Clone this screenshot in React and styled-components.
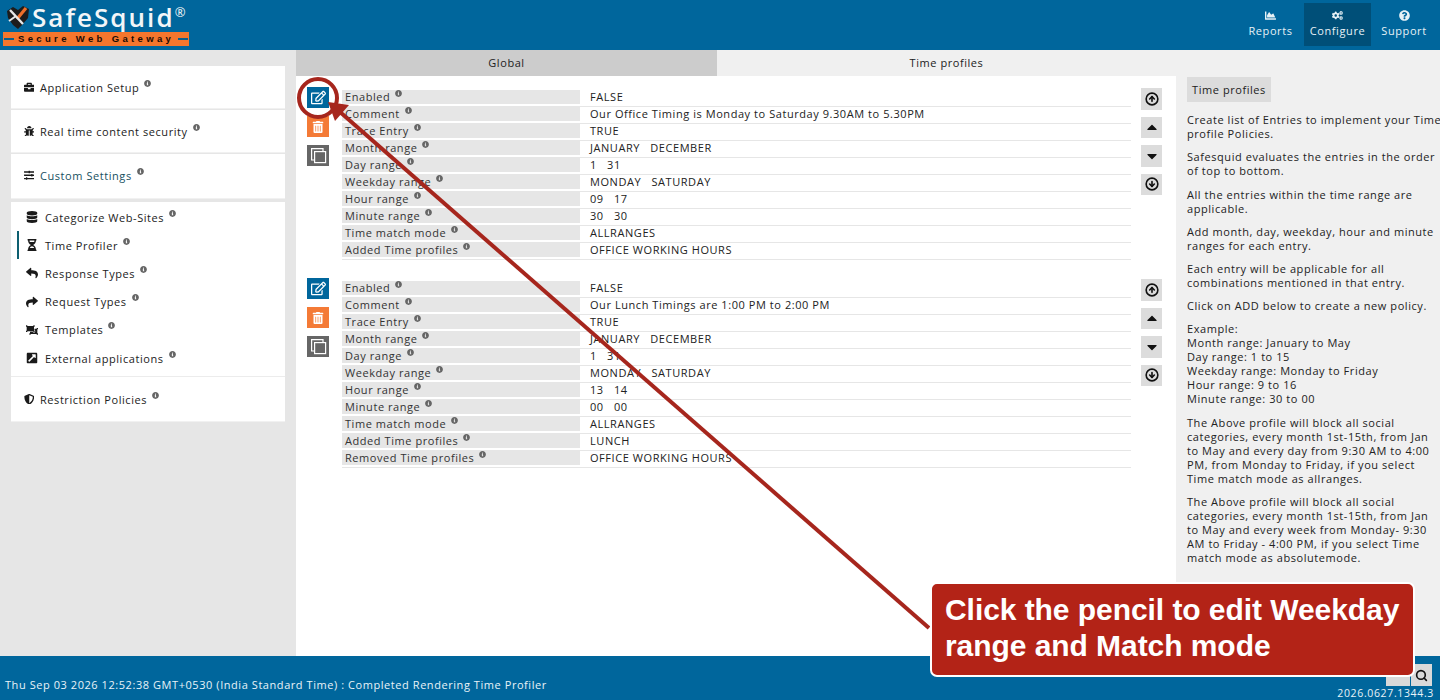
import React from 'react';
import styled, { createGlobalStyle } from 'styled-components';
import {
  FaBriefcase, FaBug, FaSlidersH, FaDatabase, FaHourglassHalf, FaReply, FaShare,
  FaObjectUngroup, FaExternalLinkSquareAlt, FaShieldAlt, FaInfoCircle, FaChartArea,
  FaCogs, FaQuestionCircle, FaRegEdit, FaTrashAlt, FaCaretUp, FaCaretDown,
} from 'react-icons/fa';
import { CircleArrowUp, CircleArrowDown, Search } from 'lucide-react';

const Global = createGlobalStyle`
  html, body { margin: 0; padding: 0; height: 700px; overflow: hidden; }
  body { font-family: "Open Sans", "Noto Sans", sans-serif; font-size: 11px; letter-spacing: 0.56px; color: #222; }
  p { margin: 0; }
`;

const Page = styled.div`
  position: relative;
  width: 1440px;
  height: 700px;
  display: grid;
  grid-template-rows: 50px 606px 44px;
  overflow: hidden;
`;

const Header = styled.header`
  background: #00669c;
  display: flex;
  justify-content: space-between;
  padding-right: 3px;
`;

const Logo = styled.div`
  width: 190px;
  padding: 2px 0 0 3px;
  display: flex;
  flex-direction: column;
`;

const LogoTop = styled.div`
  display: flex;
  align-items: center;
  height: 30px;
  gap: 2px;
  padding-left: 3px;
`;

const LogoWord = styled.span`
  font-family: "Open Sans", sans-serif;
  font-weight: 600;
  font-size: 26px;
  letter-spacing: 2.05px;
  color: #f2f6f8;
  line-height: 30px;
  sup { font-size: 13px; font-weight: 400; letter-spacing: 0; vertical-align: 10px; line-height: 0; }
`;

const LogoBar = styled.div`
  position: relative;
  width: 186px;
  height: 14px;
  background: #f5762d;
  color: #1b0c05;
  font-family: "Liberation Sans", sans-serif;
  font-weight: 700;
  font-size: 9.5px;
  letter-spacing: 3.35px;
  line-height: 14px;
  padding-left: 15px;
  box-sizing: border-box;
  white-space: nowrap;
  &::before, &::after {
    content: "";
    position: absolute;
    top: 6px;
    width: 10px;
    height: 2px;
    background: #0c5f8b;
  }
  &::before { left: 1px; }
  &::after { right: 1px; }
`;

const TopNav = styled.nav`
  display: flex;
  align-items: flex-start;
  padding-top: 3px;
`;

const TopItem = styled.div`
  width: ${p => p.$w}px;
  height: 43px;
  display: flex;
  flex-direction: column;
  align-items: center;
  padding-top: 7px;
  box-sizing: border-box;
  color: #e6f1f6;
  font-size: 11px;
  letter-spacing: 0.6px;
  background: ${p => (p.$active ? '#004f78' : 'transparent')};
  svg { font-size: 11px; margin-bottom: 2px; }
`;

const Body = styled.div`
  display: grid;
  grid-template-columns: 296px 880px 264px;
  min-height: 0;
`;

const Sidebar = styled.aside`
  background: #e6e6e6;
  padding: 16px 11px 0;
`;

const SideCard = styled.div`
  background: #fff;
  height: ${p => p.$h}px;
  margin-bottom: 2px;
  display: flex;
  align-items: center;
  padding: 0 0 ${p => p.$pb || 0}px 11px;
  box-sizing: border-box;
  color: ${p => (p.$accent ? '#17505f' : '#222')};
  box-shadow: 0 1px 0 #f1f1f1;
`;

const SubList = styled.div`
  background: #fff;
  margin-top: 4px;
  padding-top: 1px;
  display: flex;
  flex-direction: column;
  height: 175px;
  box-sizing: border-box;
  border-bottom: 1px solid #ececec;
`;

const SubItem = styled.div`
  height: 28.2px;
  display: flex;
  align-items: center;
  padding-left: ${p => (p.$active ? 6 : 8)}px;
  margin-left: 6px;
  border-left: ${p => (p.$active ? '2px solid #0d5f70' : '0')};
`;

const SideIcon = styled.span`
  display: inline-flex;
  width: 14px;
  margin-right: ${p => p.$mr || 4}px;
  justify-content: center;
  font-size: ${p => p.$size || 10.5}px;
  color: #1a1a1a;
`;

const Info = styled(FaInfoCircle)`
  font-size: 7px;
  color: #666;
  margin-left: 5px;
  position: relative;
  top: -4px;
  flex: none;
`;

const Main = styled.main`
  background: #fff;
  display: flex;
  flex-direction: column;
`;

const Tabs = styled.div`
  display: grid;
  grid-template-columns: 421px 459px;
  height: 26px;
`;

const Tab = styled.div`
  background: ${p => (p.$active ? '#cccccc' : '#f0f0f0')};
  display: flex;
  align-items: center;
  justify-content: center;
  padding-bottom: 1px;
  box-sizing: border-box;
  color: #222;
`;

const Entries = styled.div`
  padding: 14px 14px 0 11px;
  display: flex;
  flex-direction: column;
  gap: 21px;
`;

const Entry = styled.section`
  display: grid;
  grid-template-columns: 35px 1fr 21px;
`;

const ActionCol = styled.div`
  display: flex;
  flex-direction: column;
  gap: 8px;
  margin-top: -3px;
`;

const ActionBtn = styled.div`
  width: 22px;
  height: 21px;
  background: ${p => p.$bg};
  color: #fff;
  display: flex;
  align-items: center;
  justify-content: center;
  font-size: ${p => p.$size || 12}px;
`;

const Rows = styled.div`
  display: flex;
  flex-direction: column;
  margin-right: 10px;
`;

const Row = styled.div`
  display: grid;
  grid-template-columns: 238px 1fr;
  column-gap: 10px;
  height: 17px;
  box-sizing: border-box;
  border-bottom: 1px solid #e6e6e6;
  align-items: start;
`;

const RowLabel = styled.div`
  background: #e6e6e6;
  height: 14px;
  line-height: 14px;
  padding-left: 3px;
  display: flex;
  align-items: center;
  color: #333;
`;

const RowValue = styled.div`
  height: 14px;
  line-height: 14px;
  white-space: pre;
  color: #222;
`;

const MoveCol = styled.div`
  display: flex;
  flex-direction: column;
  gap: 7px;
  margin-top: -2px;
`;

const MoveBtn = styled.div`
  width: 21px;
  height: 21.5px;
  background: #dcdcdc;
  color: #111;
  display: flex;
  align-items: center;
  justify-content: center;
  font-size: 16px;
`;

const Help = styled.aside`
  background: #f0f0f0;
  padding: 27px 0 0 11px;
  line-height: 14px;
  color: #222;
  display: flex;
  flex-direction: column;
  gap: 9.2px;
  white-space: nowrap;
`;

const HelpTitle = styled.div`
  background: #dcdcdc;
  width: 84px;
  height: 25px;
  line-height: 25px;
  text-align: center;
  margin-bottom: 2px;
`;

const Footer = styled.footer`
  background: #00669c;
  color: #e8f3f8;
  display: flex;
  justify-content: space-between;
  align-items: flex-end;
  padding: 0 6px 0 5px;
`;

const Status = styled.div`
  padding-bottom: 8px;
`;

const FooterRight = styled.div`
  display: flex;
  flex-direction: column;
  align-items: flex-end;
`;

const FooterTools = styled.div`
  display: flex;
  gap: 1px;
  margin-right: 2px;
`;

const ToolBtn = styled.div`
  width: ${p => p.$w}px;
  height: 22px;
  background: #d9d9d9;
  color: #111;
  display: flex;
  align-items: center;
  justify-content: center;
`;

const Version = styled.div`
  font-size: 10.5px;
  letter-spacing: 0.65px;
  line-height: 14px;
`;

const Overlay = styled.svg`
  position: absolute;
  inset: 0;
  pointer-events: none;
`;

const Callout = styled.div`
  position: absolute;
  left: 930px;
  top: 582px;
  width: 485px;
  height: 95px;
  box-sizing: border-box;
  background: #b32317;
  border: 2px solid #fff;
  border-radius: 7px;
  color: #fff;
  font-family: "Liberation Sans", Arial, sans-serif;
  font-weight: 700;
  font-size: 30px;
  letter-spacing: -0.06px;
  line-height: 36px;
  padding: 8px 0 0 13px;
`;

const Label = ({ children }) => <>{children}<Info /></>;

const entry1 = [
  ['Enabled', 'FALSE'],
  ['Comment', 'Our Office Timing is Monday to Saturday 9.30AM to 5.30PM'],
  ['Trace Entry', 'TRUE'],
  ['Month range', 'JANUARY   DECEMBER'],
  ['Day range', '1   31'],
  ['Weekday range', 'MONDAY   SATURDAY'],
  ['Hour range', '09   17'],
  ['Minute range', '30   30'],
  ['Time match mode', 'ALLRANGES'],
  ['Added Time profiles', 'OFFICE WORKING HOURS'],
];

const entry2 = [
  ['Enabled', 'FALSE'],
  ['Comment', 'Our Lunch Timings are 1:00 PM to 2:00 PM'],
  ['Trace Entry', 'TRUE'],
  ['Month range', 'JANUARY   DECEMBER'],
  ['Day range', '1   31'],
  ['Weekday range', 'MONDAY   SATURDAY'],
  ['Hour range', '13   14'],
  ['Minute range', '00   00'],
  ['Time match mode', 'ALLRANGES'],
  ['Added Time profiles', 'LUNCH'],
  ['Removed Time profiles', 'OFFICE WORKING HOURS'],
];

const subItems = [
  [FaDatabase, 'Categorize Web-Sites'],
  [FaHourglassHalf, 'Time Profiler', true],
  [FaReply, 'Response Types'],
  [FaShare, 'Request Types'],
  [FaObjectUngroup, 'Templates'],
  [FaExternalLinkSquareAlt, 'External applications'],
];

const CloneIcon = () => (
  <svg width="17" height="17" viewBox="0 0 17 17" fill="none" stroke="#fff" strokeWidth="1.2" aria-hidden="true">
    <path d="M4 13 H1.6 V1.6 H13 V4" />
    <rect x="4.6" y="4.6" width="11" height="11" />
  </svg>
);

const EntryBlock = ({ rows }) => (
  <Entry>
    <ActionCol>
      <ActionBtn $bg="#00669c" $size={15}><FaRegEdit /></ActionBtn>
      <ActionBtn $bg="#f47a36" $size={12}><FaTrashAlt /></ActionBtn>
      <ActionBtn $bg="#666666"><CloneIcon /></ActionBtn>
    </ActionCol>
    <Rows>
      {rows.map(([k, v]) => (
        <Row key={k}>
          <RowLabel><Label>{k}</Label></RowLabel>
          <RowValue>{v}</RowValue>
        </Row>
      ))}
    </Rows>
    <MoveCol>
      <MoveBtn><CircleArrowUp size={14} strokeWidth={2.8} /></MoveBtn>
      <MoveBtn><FaCaretUp /></MoveBtn>
      <MoveBtn><FaCaretDown /></MoveBtn>
      <MoveBtn><CircleArrowDown size={14} strokeWidth={2.8} /></MoveBtn>
    </MoveCol>
  </Entry>
);

export default function App() {
  return (
    <Page>
      <Global />
      <Header>
        <Logo>
          <LogoTop>
            <svg width="24" height="24" viewBox="0 0 24 24" aria-hidden="true">
              <path d="M1 6 L7 2 L12 5 L17 1 L23 4 L22 13 L16 20 L12 24 L7 20 L2 13 Z" fill="#1d1c1c" />
              <path d="M11 14 L20 3" stroke="#ef6f2a" strokeWidth="3.2" />
              <path d="M4 5 L17 19" stroke="#e8e8e8" strokeWidth="2.4" />
              <path d="M3 16 L10 11" stroke="#e8e8e8" strokeWidth="2" />
            </svg>
            <LogoWord>SafeSquid<sup>®</sup></LogoWord>
          </LogoTop>
          <LogoBar>Secure Web Gateway</LogoBar>
        </Logo>
        <TopNav>
          <TopItem $w={67}><FaChartArea />Reports</TopItem>
          <TopItem $w={67} $active><FaCogs />Configure</TopItem>
          <TopItem $w={66}><FaQuestionCircle />Support</TopItem>
        </TopNav>
      </Header>
      <Body>
        <Sidebar>
          <SideCard $h={42}><SideIcon><FaBriefcase /></SideIcon><Label>Application Setup</Label></SideCard>
          <SideCard $h={42}><SideIcon><FaBug /></SideIcon><Label>Real time content security</Label></SideCard>
          <SideCard $h={44} $pb={2} $accent><SideIcon><FaSlidersH /></SideIcon><Label>Custom Settings</Label></SideCard>
          <SubList>
            {subItems.map(([Icon, text, active]) => (
              <SubItem key={text} $active={active}>
                <SideIcon $mr={6} $size={12}><Icon /></SideIcon>
                <Label>{text}</Label>
              </SubItem>
            ))}
          </SubList>
          <SideCard $h={44}><SideIcon><FaShieldAlt /></SideIcon><Label>Restriction Policies</Label></SideCard>
        </Sidebar>
        <Main>
          <Tabs>
            <Tab $active>Global</Tab>
            <Tab>Time profiles</Tab>
          </Tabs>
          <Entries>
            <EntryBlock rows={entry1} />
            <EntryBlock rows={entry2} />
          </Entries>
        </Main>
        <Help>
          <HelpTitle>Time profiles</HelpTitle>
          <p>Create list of Entries to implement your Time<br />profile Policies.</p>
          <p>Safesquid evaluates the entries in the order<br />of top to bottom.</p>
          <p>All the entries within the time range are<br />applicable.</p>
          <p>Add month, day, weekday, hour and minute<br />ranges for each entry.</p>
          <p>Each entry will be applicable for all<br />combinations mentioned in that entry.</p>
          <p>Click on ADD below to create a new policy.</p>
          <p>Example:<br />Month range: January to May<br />Day range: 1 to 15<br />Weekday range: Monday to Friday<br />Hour range: 9 to 16<br />Minute range: 30 to 00</p>
          <p>The Above profile will block all social<br />categories, every month 1st-15th, from Jan<br />to May and every day from 9:30 AM to 4:00<br />PM, from Monday to Friday, if you select<br />Time match mode as allranges.</p>
          <p>The Above profile will block all social<br />categories, every month 1st-15th, from Jan<br />to May and every week from Monday- 9:30<br />AM to Friday - 4:00 PM, if you select Time<br />match mode as absolutemode.</p>
        </Help>
      </Body>
      <Footer>
        <Status>Thu Sep 03 2026 12:52:38 GMT+0530 (India Standard Time) : Completed Rendering Time Profiler</Status>
        <FooterRight>
          <FooterTools>
            <ToolBtn $w={24} />
            <ToolBtn $w={21}><Search size={13} strokeWidth={3} /></ToolBtn>
          </FooterTools>
          <Version>2026.0627.1344.3</Version>
        </FooterRight>
      </Footer>
      <Overlay width="1440" height="700" viewBox="0 0 1440 700" aria-hidden="true">
        <circle cx="318" cy="98" r="19" fill="none" stroke="#a6261d" strokeWidth="4" />
        <line x1="929" y1="628" x2="340" y2="112" stroke="#a6261d" strokeWidth="4" />
        <path d="M328 102 L349 105 L335 121 Z" fill="#a6261d" />
      </Overlay>
      <Callout>Click the pencil to edit Weekday<br />range and Match mode</Callout>
    </Page>
  );
}
